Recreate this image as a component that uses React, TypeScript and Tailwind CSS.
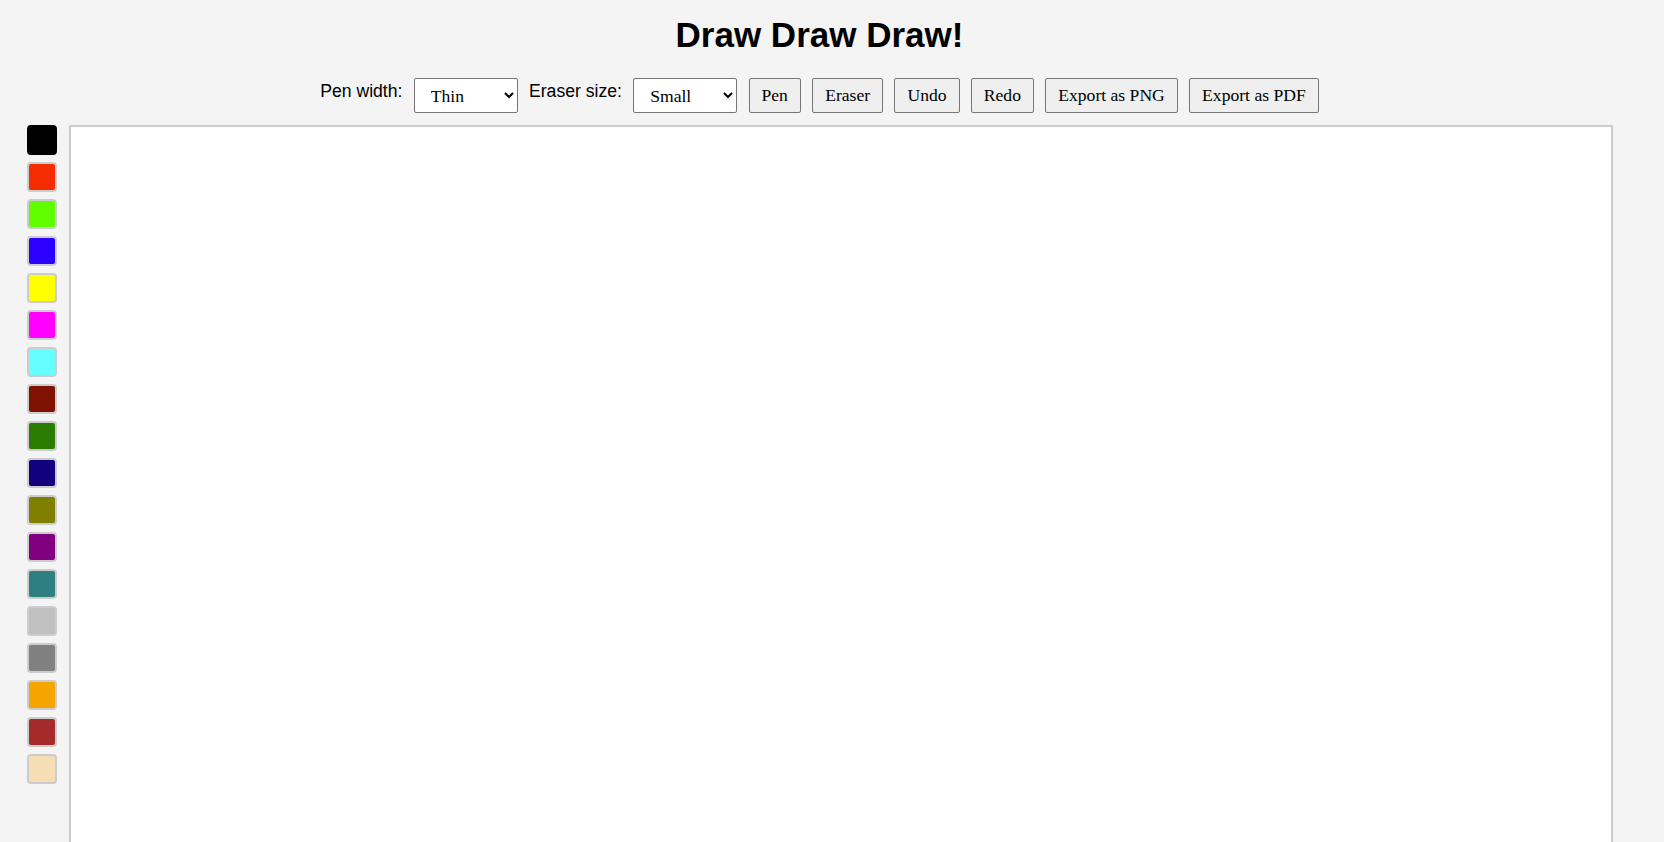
import React, { useState } from 'react';

const COLORS = [
  '#000000',
  '#f52c00',
  '#5fff00',
  '#2c00ff',
  '#ffff00',
  '#ff00ff',
  '#66ffff',
  '#7f1200',
  '#2a7d00',
  '#12007e',
  '#808000',
  '#800080',
  '#2e8080',
  '#c0c0c0',
  '#808080',
  '#f5a500',
  '#a52a2a',
  '#f5deb3',
];

const btn =
  "h-[35px] px-[12px] border border-[#767676] rounded-[2px] bg-[#efefef] text-black text-[17.6px] font-['Liberation_Serif','Times_New_Roman',serif] leading-none";

const sel =
  "w-[104px] h-[35px] pl-[12px] border border-[#767676] rounded-[2px] bg-white text-black text-[17.6px] font-['Liberation_Serif','Times_New_Roman',serif]";

export default function App() {
  const [color, setColor] = useState(COLORS[0]);
  const [penWidth, setPenWidth] = useState('thin');
  const [eraserSize, setEraserSize] = useState('small');

  return (
    <div className="h-[842px] overflow-hidden bg-[#f4f4f4] text-black font-['Liberation_Sans',Arial,sans-serif]">
      <div className="pr-[25px] pt-[15px]">
        <h1 className="text-center text-[35px] font-bold leading-[40px]">Draw Draw Draw!</h1>
      </div>

      <div className="mt-[23px] pr-[25px] flex justify-center items-start gap-[11.3px]">
        <label className="text-[17.6px] leading-normal">Pen width:</label>
        <select className={sel} value={penWidth} onChange={(e) => setPenWidth(e.target.value)}>
          <option value="thin">Thin</option>
          <option value="medium">Medium</option>
          <option value="thick">Thick</option>
        </select>
        <label className="text-[17.6px] leading-normal">Eraser size:</label>
        <select className={sel} value={eraserSize} onChange={(e) => setEraserSize(e.target.value)}>
          <option value="small">Small</option>
          <option value="medium">Medium</option>
          <option value="large">Large</option>
        </select>
        <button className={btn}>Pen</button>
        <button className={btn}>Eraser</button>
        <button className={btn}>Undo</button>
        <button className={btn}>Redo</button>
        <button className={btn}>Export as PNG</button>
        <button className={btn}>Export as PDF</button>
      </div>

      <div className="mt-[12px] pl-[27px] flex items-start gap-[12px]">
        <div className="flex flex-col gap-[7px]">
          {COLORS.map((c) => (
            <button
              key={c}
              onClick={() => setColor(c)}
              className={
                'w-[30px] h-[30px] border-2 rounded-[4px] ' +
                (color === c ? 'border-black' : 'border-[#cccccc]')
              }
              style={{ backgroundColor: c }}
            />
          ))}
        </div>
        <div className="w-[1544px] h-[800px] border-2 border-[#cccccc] bg-white" />
      </div>
    </div>
  );
}
